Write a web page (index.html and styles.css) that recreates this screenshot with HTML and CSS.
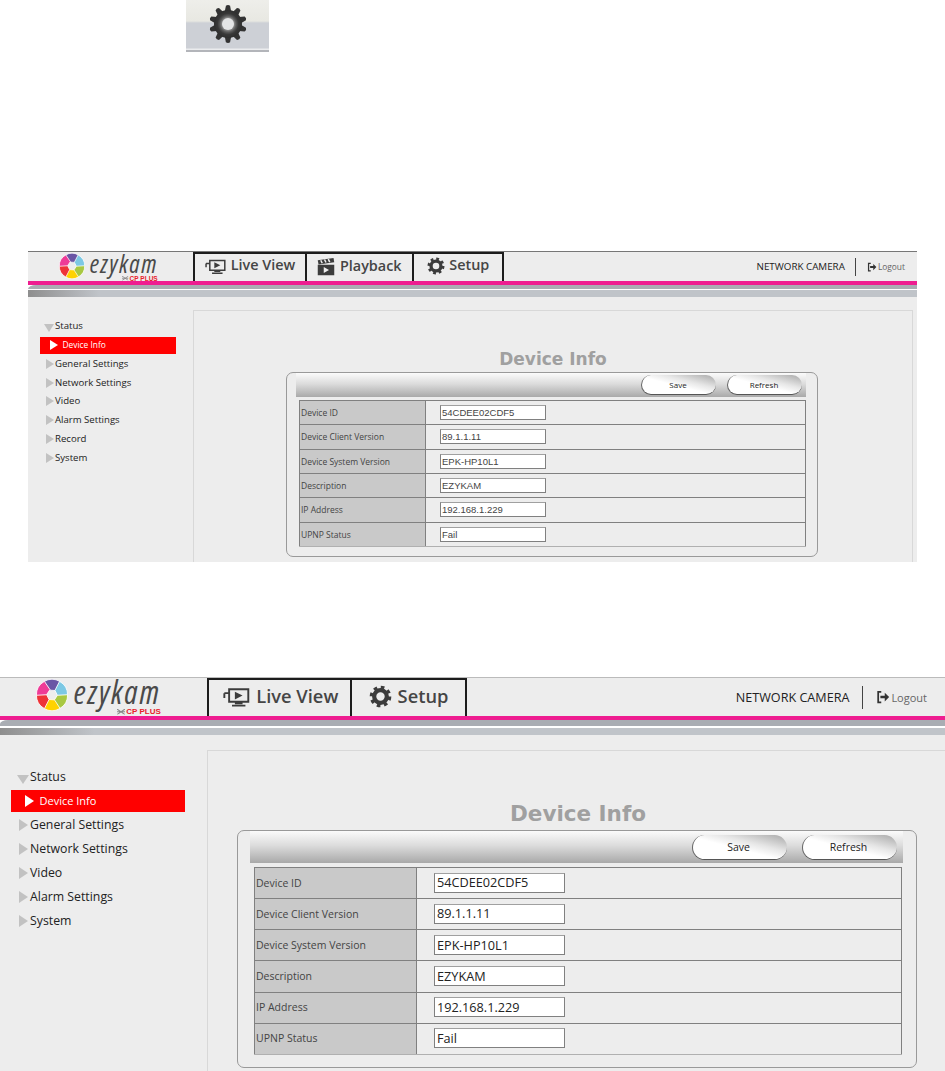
FILE: index.html
```html
<!DOCTYPE html>
<html lang="en">
<head>
<meta charset="utf-8">
<title>ezykam Device Info</title>
<link rel="stylesheet" href="styles.css">
</head>
<body>
<svg class="sprite" width="0" height="0" aria-hidden="true">
  <defs>
    <symbol id="i-gear" viewBox="0 0 24 24">
      <circle cx="12" cy="12" r="6.6" fill="none" stroke="currentColor" stroke-width="4.4"/>
      <circle cx="12" cy="12" r="9.6" fill="none" stroke="currentColor" stroke-width="3.4" stroke-dasharray="3.74 3.8"/>
    </symbol>
    <symbol id="i-live" viewBox="0 0 28 24">
      <path d="M6 4.500h20v13H6zM1 8.500h5M1 8.500v5M9 21.500h14M12 19h8" fill="none" stroke="currentColor" stroke-width="2"/>
      <path d="M12 7l8 4-8 4z" fill="currentColor"/>
    </symbol>
    <symbol id="i-clap" viewBox="0 0 24 24">
      <path d="M1 9h22v14H1z" fill="currentColor"/>
      <path d="M1 3l21-3 1 5.500-21 3z" fill="currentColor"/>
      <path d="M5 3l2 4M10 2l2 4M15 1.500l2 4" stroke="#eee" stroke-width="2"/>
      <path d="M9 12l7 4-7 4z" fill="#eee"/>
    </symbol>
    <symbol id="i-logout" viewBox="0 0 16 16">
      <path d="M6 2H2.500v12H6" fill="none" stroke="currentColor" stroke-width="2"/>
      <path d="M5 6.500h5V3l5 5-5 5V9.500H5z" fill="currentColor"/>
    </symbol>
    <symbol id="i-aperture" viewBox="-16.500 -16.500 33 33">
      <g stroke="#fff" stroke-width=".8">
        <path fill="#6a55a5" d="M-8.300-13.800A16 16 0 0 1 8.300-13.800L3.800-4.600-2.600-5Z"/>
        <path fill="#7cc8e4" transform="rotate(60)" d="M-8.300-13.800A16 16 0 0 1 8.300-13.800L3.800-4.600-2.600-5Z"/>
        <path fill="#a8c842" transform="rotate(120)" d="M-8.300-13.800A16 16 0 0 1 8.300-13.800L3.800-4.600-2.600-5Z"/>
        <path fill="#ffd200" transform="rotate(180)" d="M-8.300-13.800A16 16 0 0 1 8.300-13.800L3.800-4.600-2.600-5Z"/>
        <path fill="#ee3338" transform="rotate(240)" d="M-8.300-13.800A16 16 0 0 1 8.300-13.800L3.800-4.600-2.600-5Z"/>
        <path fill="#ee3b97" transform="rotate(300)" d="M-8.300-13.800A16 16 0 0 1 8.300-13.800L3.800-4.600-2.600-5Z"/>
      </g>
    </symbol>
    <symbol id="i-cross" viewBox="0 0 10 7">
      <path d="M0 0l10 7M10 0L0 7M0 3.500h10" stroke="#8a8a8a" stroke-width="1.300" fill="none"/>
    </symbol>
    <path id="big-tooth" d="M-3.200-12.500L-2.100-18.200Q0-19.800 2.100-18.200L3.200-12.500Z" fill="#333"/>
    <radialGradient id="gear-shade" cx="50%" cy="50%" r="50%">
      <stop offset="0" stop-color="#b0b0b0"/>
      <stop offset=".44" stop-color="#8a8a8a"/>
      <stop offset=".58" stop-color="#5a5a5a"/>
      <stop offset=".75" stop-color="#383838"/>
      <stop offset="1" stop-color="#2e2e2e"/>
    </radialGradient>
  </defs>
</svg>

<div class="gear-tile">
  <svg class="gear-tile-icon" viewBox="-20 -20 40 40" aria-hidden="true">
    <use href="#big-tooth"/>
    <use href="#big-tooth" transform="rotate(36)"/>
    <use href="#big-tooth" transform="rotate(72)"/>
    <use href="#big-tooth" transform="rotate(108)"/>
    <use href="#big-tooth" transform="rotate(144)"/>
    <use href="#big-tooth" transform="rotate(180)"/>
    <use href="#big-tooth" transform="rotate(216)"/>
    <use href="#big-tooth" transform="rotate(252)"/>
    <use href="#big-tooth" transform="rotate(288)"/>
    <use href="#big-tooth" transform="rotate(324)"/>
    <circle r="14" fill="url(#gear-shade)"/>
    <circle r="6" fill="#e4e5e6"/>
  </svg>
</div>

<section class="cam cam--small">
  <header class="cam-head">
    <div class="logo">
      <svg class="logo-mark"><use href="#i-aperture"/></svg>
      <div class="logo-words"><span class="logo-name">ezykam</span><span class="logo-brand"><svg class="logo-cross"><use href="#i-cross"/></svg>CP PLUS</span></div>
    </div>
    <nav class="tabs">
      <a class="tab tab--live"><svg class="tab-icon tab-icon--live"><use href="#i-live"/></svg>Live View</a>
      <a class="tab tab--play"><svg class="tab-icon"><use href="#i-clap"/></svg>Playback</a>
      <a class="tab tab--setup"><svg class="tab-icon"><use href="#i-gear"/></svg>Setup</a>
    </nav>
    <div class="meta">
      <span class="meta-name">NETWORK CAMERA</span>
      <a class="meta-logout"><svg class="meta-icon"><use href="#i-logout"/></svg>Logout</a>
    </div>
  </header>
  <div class="rule"></div>
  <div class="stripes"><div class="stripe-a"></div><div class="stripe-b"></div></div>
  <div class="cam-body">
    <ul class="menu">
      <li class="menu-item is-open">Status</li>
      <li class="menu-item is-active">Device Info</li>
      <li class="menu-item">General Settings</li>
      <li class="menu-item">Network Settings</li>
      <li class="menu-item">Video</li>
      <li class="menu-item">Alarm Settings</li>
      <li class="menu-item">Record</li>
      <li class="menu-item">System</li>
    </ul>
    <main class="pane">
      <h2 class="pane-title">Device Info</h2>
      <div class="box">
        <div class="toolbar"><button class="btn">Save</button><button class="btn">Refresh</button></div>
        <table class="info">
          <tr><th>Device ID</th><td><span class="field">54CDEE02CDF5</span></td></tr>
          <tr><th>Device Client Version</th><td><span class="field">89.1.1.11</span></td></tr>
          <tr><th>Device System Version</th><td><span class="field">EPK-HP10L1</span></td></tr>
          <tr><th>Description</th><td><span class="field">EZYKAM</span></td></tr>
          <tr><th>IP Address</th><td><span class="field">192.168.1.229</span></td></tr>
          <tr><th>UPNP Status</th><td><span class="field">Fail</span></td></tr>
        </table>
      </div>
    </main>
  </div>
</section>

<section class="cam cam--large">
  <header class="cam-head">
    <div class="logo">
      <svg class="logo-mark"><use href="#i-aperture"/></svg>
      <div class="logo-words"><span class="logo-name">ezykam</span><span class="logo-brand"><svg class="logo-cross"><use href="#i-cross"/></svg>CP PLUS</span></div>
    </div>
    <nav class="tabs">
      <a class="tab tab--live"><svg class="tab-icon tab-icon--live"><use href="#i-live"/></svg>Live View</a>
      <a class="tab tab--setup"><svg class="tab-icon"><use href="#i-gear"/></svg>Setup</a>
    </nav>
    <div class="meta">
      <span class="meta-name">NETWORK CAMERA</span>
      <a class="meta-logout"><svg class="meta-icon"><use href="#i-logout"/></svg>Logout</a>
    </div>
  </header>
  <div class="rule"></div>
  <div class="stripes"><div class="stripe-a"></div><div class="stripe-b"></div></div>
  <div class="cam-body">
    <ul class="menu">
      <li class="menu-item is-open">Status</li>
      <li class="menu-item is-active">Device Info</li>
      <li class="menu-item">General Settings</li>
      <li class="menu-item">Network Settings</li>
      <li class="menu-item">Video</li>
      <li class="menu-item">Alarm Settings</li>
      <li class="menu-item">System</li>
    </ul>
    <main class="pane">
      <h2 class="pane-title">Device Info</h2>
      <div class="box">
        <div class="toolbar"><button class="btn">Save</button><button class="btn">Refresh</button></div>
        <table class="info">
          <tr><th>Device ID</th><td><span class="field">54CDEE02CDF5</span></td></tr>
          <tr><th>Device Client Version</th><td><span class="field">89.1.1.11</span></td></tr>
          <tr><th>Device System Version</th><td><span class="field">EPK-HP10L1</span></td></tr>
          <tr><th>Description</th><td><span class="field">EZYKAM</span></td></tr>
          <tr><th>IP Address</th><td><span class="field">192.168.1.229</span></td></tr>
          <tr><th>UPNP Status</th><td><span class="field">Fail</span></td></tr>
        </table>
      </div>
    </main>
  </div>
</section>
</body>
</html>
```
FILE: styles.css
```css
* { box-sizing: border-box; }
html, body { margin: 0; padding: 0; background: #fff; }
body { height: 1071px; overflow: hidden; font-family: "Open Sans", "Noto Sans", sans-serif; color: #333; }
.sprite { display: block; height: 0; }

/* top gear tile */
.gear-tile {
  margin-left: 186px; width: 83px; height: 52px; display: flex; justify-content: center; padding-top: 4px;
  background: linear-gradient(#eeeeea 0, #e8e8e2 21px, #cdd0d6 23px, #cdd0d6 48px, #ebecee 49px, #ebecee 50px, #b3b5ba 50px);
}
.gear-tile-icon { width: 40px; height: 40px; filter: blur(.5px); }

/* variant sizes */
.cam--small {
  --head-h: 30px; --head-line: #777; --logo-slot: 165px; --logo-pad: 31px; --mark: 26px; --name: 25px; --name-track: 1.500px; --words: 68px; --brand: 6.500px;
  --tab-font: 14.400px; --tab-icon: 18px; --tab-gap: 4.500px; --tab-b: 2px; --tab-lift: 4px;
  --meta-font: 9.800px; --logout-font: 8.400px; --meta-pad: 10px; --meta-h: 18px; --meta-gap: 11px; --meta-right: 12px; --meta-icon: 10px;
  --stripe-a: 4px; --stripe-w: 1px; --stripe-b: 7px; --stripe-fade: 8%;
  --side: 165px; --menu-left: 12px; --menu-top: 19.900px; --menu-w: 136px; --item-h: 18.750px; --active-h: 17px; --menu-font: 9.600px; --active-font: 8.400px; --active-lift: 0px;
  --txt: 15px; --tri-w: 8px; --tri-h: 5px; --tri-x: 6px;
  --pane-top: 13px; --pane-right: 4px; --title: 17px; --title-top: 40px; --title-h: 21px; --title-shift: 0px;
  --box-w: 532px; --box-h: 185px; --box-left: 92px; --bar-l: 9px; --bar-r: 11px; --bar-h: 24px; --btn-w: 75px; --btn-h: 20px; --btn-gap: 11px; --btn-right: 4px; --btn-font: 8px; --btn-pad: 2px; --btn-top: 0px;
  --tbl-l: 12px; --tbl-w: 507px; --tbl-h: 147px; --tbl-top: 3px; --th-w: 126px; --cell-font: 8.500px; --field-x: 14px; --field-w: 106px; --field-h: 15px; --field-font: 9.500px; --field-pad: 1px; --cell-lift: 0px;
  margin: 199px 28px 0; width: 889px; height: 311px;
}
.cam--large {
  --head-h: 39px; --head-line: #bbb; --logo-slot: 207px; --logo-pad: 36px; --mark: 32px; --name: 32px; --name-track: 1.900px; --words: 87px; --brand: 8px;
  --tab-font: 18.300px; --tab-icon: 23px; --tab-gap: 6px; --tab-b: 2px; --tab-lift: 4px;
  --meta-font: 12.600px; --logout-font: 11px; --meta-pad: 13px; --meta-h: 23px; --meta-gap: 13px; --meta-right: 18px; --meta-icon: 14px;
  --stripe-a: 6px; --stripe-w: 2px; --stripe-b: 7px; --stripe-fade: 10%;
  --side: 207px; --menu-left: 11px; --menu-top: 30px; --menu-w: 174px; --item-h: 24px; --active-h: 22px; --menu-font: 12.300px; --active-font: 11px; --active-lift: 2px;
  --txt: 19px; --tri-w: 9px; --tri-h: 6px; --tri-x: 8px;
  --pane-top: 15px; --pane-right: 0px; --title: 21.500px; --title-top: 52px; --title-h: 27px; --title-shift: 3px;
  --box-w: 680px; --box-h: 238px; --box-left: 29px; --bar-l: 12px; --bar-r: 13px; --bar-h: 32px; --btn-w: 95px; --btn-h: 25px; --btn-gap: 15px; --btn-right: 6px; --btn-font: 10.500px; --btn-pad: 3px; --btn-top: 1px;
  --tbl-l: 16px; --tbl-w: 648px; --tbl-h: 188px; --tbl-top: 4px; --th-w: 162px; --cell-font: 10.500px; --field-x: 17px; --field-w: 131px; --field-h: 20px; --field-font: 12.700px; --field-pad: 2px; --cell-lift: 1px;
  margin: 115px 0 0; width: 945px; height: 394px;
}

.cam { display: flex; flex-direction: column; background: #ededed; }
.cam-head { display: flex; height: var(--head-h); flex: none; border-top: 1px solid var(--head-line); }

/* logo */
.logo { width: var(--logo-slot); flex: none; padding-left: var(--logo-pad); display: flex; gap: calc(var(--mark) * .18); }
.logo-mark { width: var(--mark); height: var(--mark); flex: none; margin-top: 1px; }
.logo-words { flex: none; display: flex; flex-direction: column; align-items: flex-end; width: var(--words); }
.logo-name {
  display: block; align-self: flex-start; white-space: nowrap;
  font: italic 400 var(--name)/1.04 "Open Sans", sans-serif; font-stretch: 75%; letter-spacing: var(--name-track); color: #4a4a4a;
  margin-top: -.1em;
}
.logo-brand { display: flex; align-items: center; gap: 1px; font: 700 var(--brand)/1 "Liberation Sans", sans-serif; color: #e8202a; }
.logo-cross { width: 1em; height: .7em; }

/* tabs */
.tabs { display: flex; }
.tab {
  display: flex; align-items: center; justify-content: center; gap: var(--tab-gap);
  border: var(--tab-b) solid #1c1c1c; border-bottom: 0; margin-left: calc(var(--tab-b) * -1); padding-bottom: var(--tab-lift);
  font-size: var(--tab-font); font-weight: 600; color: #454545; line-height: 1;
}
.cam--small .tab--live { width: 114px; margin-left: 0; }
.cam--small .tab--play { width: 109px; padding-bottom: 2px; }
.cam--small .tab--setup { width: 92px; }
.cam--large .tab--live { width: 145px; margin-left: 0; padding-left: 2px; }
.cam--large .tab--setup { width: 117px; }
.tab-icon { width: var(--tab-icon); height: var(--tab-icon); flex: none; color: #3c3c3c; }
.tab-icon--live { width: calc(var(--tab-icon) * 1.2); }

/* right meta */
.meta { margin-left: auto; display: flex; align-items: center; padding-right: var(--meta-right); }
.meta-name { font-size: var(--meta-font); color: #222; padding-right: var(--meta-pad); border-right: 1px solid #444; height: var(--meta-h); display: flex; align-items: center; }
.meta-logout { display: flex; align-items: center; gap: 1px; margin-left: var(--meta-gap); font-size: var(--logout-font); color: #666; }
.meta-icon { width: var(--meta-icon); height: var(--meta-icon); color: #333; }

/* rule + stripes */
.rule { height: 4px; flex: none; background: #ee1d90; }
.stripes { flex: none; background: #fff; }
.stripe-a { height: var(--stripe-a); background: #a9adb3; margin-bottom: var(--stripe-w); border-top-left-radius: 8px 4px; }
.stripe-b { height: var(--stripe-b); background: linear-gradient(90deg, #8e8e8e 0, #c0c4c9 var(--stripe-fade), #c0c4c9 100%); }

/* body */
.cam-body { flex: 1; display: flex; min-height: 0; }
.menu { list-style: none; margin: 0; padding: var(--menu-top) 0 0 var(--menu-left); width: var(--side); flex: none; }
.menu-item {
  position: relative; height: var(--item-h); width: var(--menu-w); display: flex; align-items: center;
  padding-left: var(--txt); font-size: var(--menu-font); color: #222; line-height: 1;
}
.menu-item::before {
  content: ""; position: absolute; left: var(--tri-x); top: 50%; margin-top: calc(var(--tri-h) * -1);
  border-left: var(--tri-w) solid #c2c2c2; border-top: var(--tri-h) solid transparent; border-bottom: var(--tri-h) solid transparent;
}
.menu-item.is-open::before {
  left: calc(var(--tri-x) - 2px); margin-top: calc(var(--tri-h) * -.4);
  border-top: var(--tri-w) solid #c2c2c2; border-left: var(--tri-h) solid transparent; border-right: var(--tri-h) solid transparent; border-bottom: 0;
}
.menu-item.is-active {
  color: #fff; font-size: var(--active-font); padding-left: calc(var(--txt) * 1.5); padding-bottom: var(--active-lift);
  background: linear-gradient(#f00, #f00) 0 50% / 100% var(--active-h) no-repeat;
}
.menu-item.is-active::before { left: calc(var(--tri-x) * 1.7); border-left-color: #fff; }

/* pane */
.pane {
  flex: 1; margin: var(--pane-top) var(--pane-right) 0 0; border: 1px solid #d8d8d8; border-bottom: 0; min-width: 0;
  padding-top: var(--title-top);
}
.cam--large .pane { border-right: 0; }
.pane-title {
  margin: 0; height: var(--title-h); padding-left: var(--title-shift); text-align: center;
  font: 700 var(--title)/1 "DejaVu Sans", sans-serif; color: #a0a0a0;
}
.box {
  margin-left: var(--box-left); width: var(--box-w); height: var(--box-h);
  border: 1px solid #999; border-radius: 7px; padding-left: var(--bar-l);
}
.toolbar {
  height: var(--bar-h); margin-right: var(--bar-r); padding-right: var(--btn-right);
  display: flex; align-items: center; justify-content: flex-end; gap: var(--btn-gap);
  background: linear-gradient(#fbfbfb, #dcdcdc 45%, #a9a9a9);
}
.btn {
  width: var(--btn-w); height: var(--btn-h); padding: var(--btn-top) var(--btn-pad) 0 0; border: 0;
  border-left: 1px solid #666; border-bottom: 1px solid #555; border-radius: 999px;
  background: linear-gradient(to top right, #fff 45%, #e6e6e6 65%, #a8a8a8 100%);
  font: 400 var(--btn-font)/1 "Open Sans", sans-serif; color: #222;
}
.info {
  margin: var(--tbl-top) 0 0 calc(var(--tbl-l) - var(--bar-l)); width: var(--tbl-w); height: var(--tbl-h);
  border-collapse: collapse; table-layout: fixed;
}
.info th, .info td { border: 1px solid #808080; padding: 0; border-left: 0; }
.info tr:last-child th, .info tr:last-child td { border-top-color: #b0b0b0; border-bottom-color: #b0b0b0; }
.info th {
  width: var(--th-w); background: #c9c9c9; border-left: 1px solid #808080; border-right: 1px solid #808080;
  font-size: var(--cell-font); font-weight: 400; color: #444; text-align: left; padding: 0 0 var(--cell-lift) 1px;
}
.info td { padding: 0 0 var(--cell-lift) var(--field-x); border-right: 1px solid #808080; }
.field {
  display: flex; align-items: center; width: var(--field-w); height: var(--field-h); padding-left: var(--field-pad);
  background: #fff; border: 1px solid #808080; border-top-color: #a0a0a0;
  font-size: var(--field-font); color: #222; line-height: 1;
}
.cam--small .field { font-family: "Liberation Sans", sans-serif; color: #444; }
```
